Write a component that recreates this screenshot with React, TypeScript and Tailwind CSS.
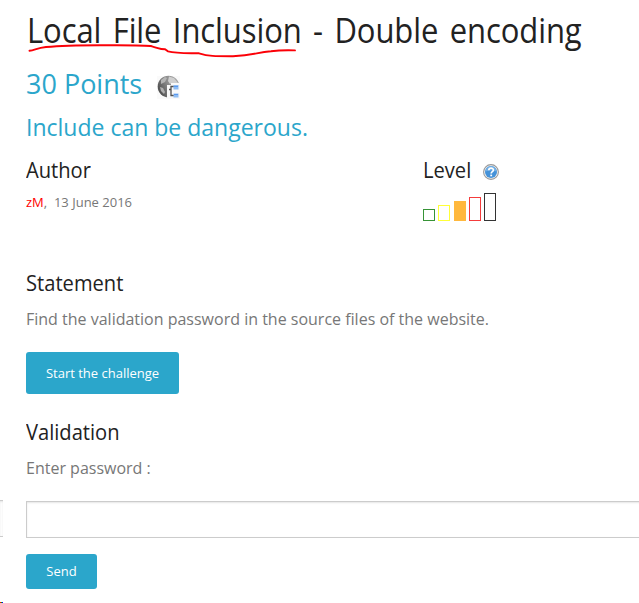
import type { ReactNode } from "react";

function Heading({ children, className }: { children: ReactNode; className: string }) {
  return (
    <h4 className={`h-[41px] origin-left scale-x-[0.915] text-[22px] leading-[41px] whitespace-nowrap text-[#222] ${className}`}>
      {children}
    </h4>
  );
}

function GlobeIcon() {
  return (
    <svg width="24" height="24" viewBox="0 0 24 24" className="mt-[16px] ml-[14px] shrink-0">
      <defs>
        <linearGradient id="globe" x1="0" y1="0.7" x2="1" y2="0.2">
          <stop offset="0" stopColor="#4a4a4a" />
          <stop offset="0.5" stopColor="#8a8a8a" />
          <stop offset="1" stopColor="#a8a8a8" />
        </linearGradient>
      </defs>
      <rect x="1" y="1" width="23" height="23" fill="#fafafa" />
      <circle cx="12.5" cy="11.5" r="10.8" fill="url(#globe)" />
      <path d="M13 1.500 18 3l4 5-3 1-3-1-2 1-2-3z" fill="#cfcfcf" />
      <path d="M5 5l4-3 2 1-2 4-4 2z" fill="#b4b4b4" />
      <path d="M4 12l3 1 2 4-1 2-3-3z" fill="#b0b0b0" />
      <path d="M11 10h4V8h9v16H11z" fill="#f9f9f9" />
      <path d="M18 11.500h-3v9h3M13 14.500h2" fill="none" stroke="#505050" strokeWidth="1.300" />
      <rect x="17.500" y="10" width="5" height="4.500" fill="#8fbdf3" />
      <rect x="17.500" y="18.500" width="5" height="4" fill="#8fbdf3" />
      <path d="M18 11.500h4M18 19.500h4" stroke="#5b98ed" />
    </svg>
  );
}

function HelpIcon() {
  return (
    <svg width="16" height="16" viewBox="0 0 16 16" className="mt-[15px] ml-[7px] shrink-0">
      <circle cx="8" cy="8" r="7.400" fill="#f5f5f5" stroke="#999" strokeWidth="1.1" />
      <circle cx="8" cy="8" r="6" fill="#4592d8" />
      <path d="M2.500 7.500a5.500 5.500 0 0 1 11 0Q8 5.500 2.500 7.500z" fill="#72afe5" />
      <path d="M5.800 6.200C5.800 3.400 10.400 3.500 10.400 6c0 1.600-2.200 1.700-2.200 3.400" fill="none" stroke="#fff" strokeWidth="1.7" />
      <rect x="7.300" y="10.600" width="1.800" height="1.700" fill="#fff" />
    </svg>
  );
}

export default function App() {
  return (
    <main className="relative h-[603px] w-[639px] overflow-hidden bg-white pl-[26px] font-['Open_Sans',sans-serif]">
      <h1 className="ml-px h-[59px] w-max origin-left scale-x-[0.912] pt-px text-[34px] leading-[59px] tracking-[-0.1px] [word-spacing:3.800px] whitespace-nowrap text-[#222]">
        Local File Inclusion - Double encoding
      </h1>
      <svg width="280" height="16" viewBox="0 0 280 16" className="absolute top-[42px] left-[26px]">
        <path
          d="M3.500 8.800C9 8 11 6 20 5 41 3 65 3 91 3.300c16 0 30 0 35 1 7 2 8 3 13 3l3 2c8 2 15 1.700 31 2 10 3 16 2.900 34 2.900 21-.5 23-3.800 38-5 10-1.200 17-1 24-.8"
          fill="none"
          stroke="#fb0007"
          strokeWidth="1.9"
          strokeLinecap="round"
        />
      </svg>

      <div className="flex h-[48px] text-[27px] leading-[49px] text-[#2ba6cb]">
        <h2>30 Points</h2>
        <GlobeIcon />
      </div>
      <h3 className="h-[40px] text-[23px] leading-[40px] whitespace-nowrap text-[#2ba6cb]">Include can be dangerous.</h3>

      <section className="flex h-[115px]">
        <div className="w-[397px] pt-[2px]">
          <Heading className="">Author</Heading>
          <p className="mt-[2px] text-[13px] leading-[20px] whitespace-pre text-[#777]">
            <span className="text-[#f00]">zM</span>,{"  "}13 June 2016
          </p>
        </div>
        <div className="pt-[2px]">
          <div className="flex">
            <Heading className="w-[53px]">Level</Heading>
            <HelpIcon />
          </div>
          <div className="mt-[3px] flex h-[28px] w-[73px] items-end justify-between">
            <span className="h-[12px] w-[12px] border border-[#379337]" />
            <span className="h-[16px] w-[12px] border border-[#ffff38]" />
            <span className="h-[20px] w-[12px] bg-[#ffb83d]" />
            <span className="h-[24px] w-[12px] border border-[#f43c3c]" />
            <span className="h-[28px] w-[12px] border border-[#333]" />
          </div>
        </div>
      </section>

      <Heading className="">Statement</Heading>
      <p className="text-[16px] leading-[32px] whitespace-nowrap text-[#777]">
        Find the validation password in the source files of the website.
      </p>
      <button className="mt-[17px] block h-[42px] w-[153px] rounded-[3px] bg-[#2ba6cb] text-[13px] leading-[42px] text-white">
        Start the challenge
      </button>

      <Heading className="mt-[17px]">Validation</Heading>
      <p className="text-[16px] leading-[32px] text-[#777]">Enter password :</p>
      <input
        aria-label="Password"
        className="mt-[17px] block h-[37px] w-[640px] border border-[#ccc] bg-white shadow-[inset_0_1px_2px_rgba(0,0,0,0.1)] outline-none"
      />
      <button className="mt-[16px] block h-[35px] w-[71px] rounded-[3px] bg-[#2ba6cb] text-[13px] leading-[35px] text-white">
        Send
      </button>

      <div className="absolute top-[500px] left-0 h-[37px] w-[3px] border-y border-[#ccc] shadow-[inset_0_1px_2px_rgba(0,0,0,0.1)]" />
      <div className="absolute top-[602px] left-0 flex h-px">
        <i className="w-px bg-[#f00]" />
        <i className="w-px bg-[#0a0]" />
        <i className="w-px bg-[#00f]" />
      </div>
    </main>
  );
}
